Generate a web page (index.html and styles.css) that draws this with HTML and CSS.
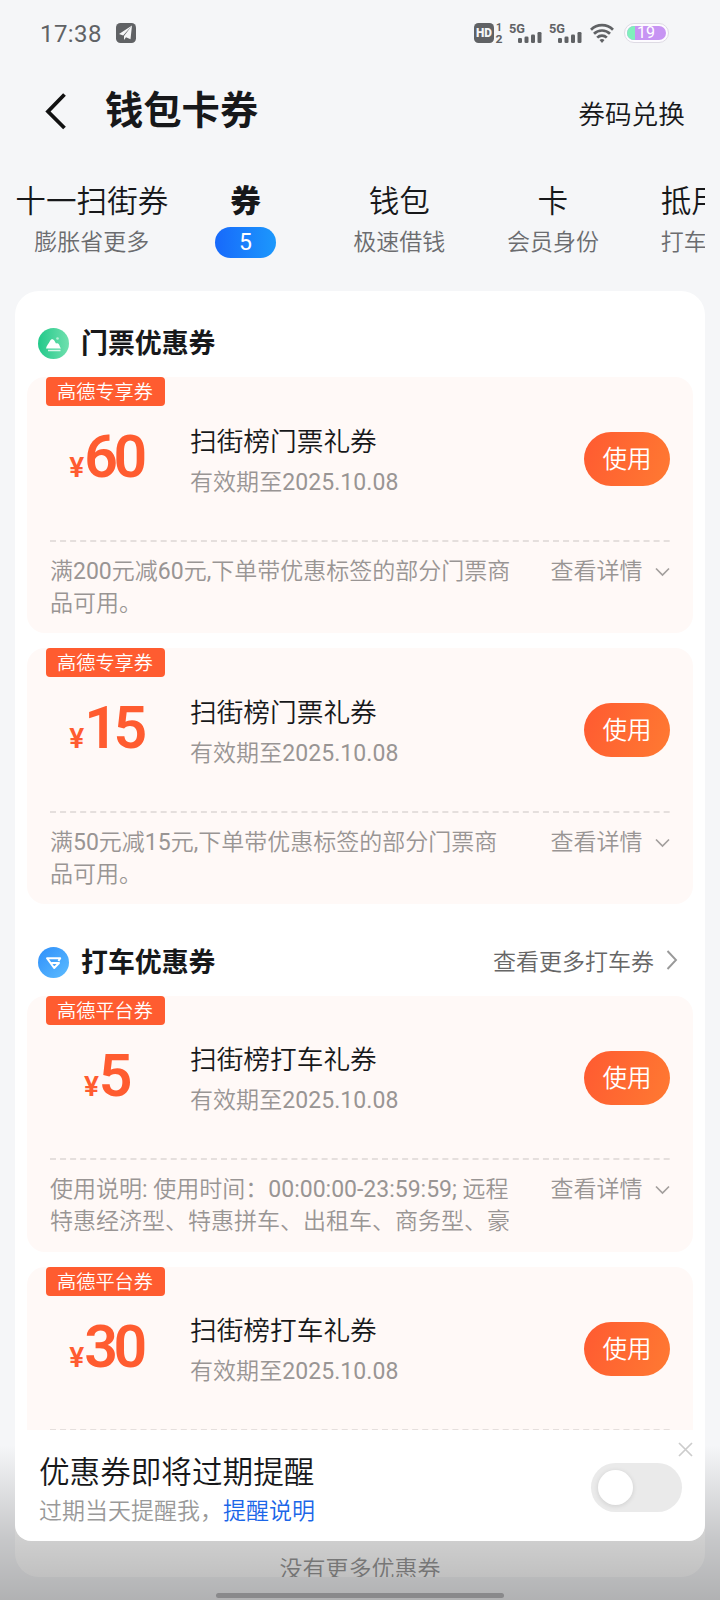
FILE: index.html
```html
<!DOCTYPE html>
<html lang="zh-CN">
<head>
<meta charset="utf-8">
<title>钱包卡券</title>
<link rel="stylesheet" href="styles.css">
</head>
<body>
<div class="screen">
  <div class="status">
    <span class="time">17:38</span>
    <svg class="plane" width="20" height="20" viewBox="0 0 20 20"><rect width="20" height="20" rx="4.500" fill="#606265"/><path d="M16 2.500 3 11l4.200 1.600zM16 2.500 8 13v4l2-2.700 4.500 2z" fill="#f5f6f8"/></svg>
    <svg class="signals" width="196" height="24" viewBox="0 0 196 24">
      <rect x="0" y="2" width="20" height="20" rx="4.500" fill="#606265"/>
      <text x="10" y="16.200" class="hd" text-anchor="middle" textLength="16" lengthAdjust="spacingAndGlyphs">HD</text>
      <text x="22" y="10" class="sim">1</text>
      <text x="21.500" y="21.500" class="sim" textLength="7" lengthAdjust="spacingAndGlyphs">2</text>
      <g fill="#606265">
        <text x="35" y="11.500" class="net" textLength="16" lengthAdjust="spacingAndGlyphs">5G</text>
        <rect x="44" y="17" width="4" height="5" rx="1.300"/><rect x="50.500" y="15.500" width="4" height="6.500" rx="1.300"/><rect x="57" y="13.500" width="4" height="8.500" rx="1.300"/><rect x="63.500" y="11" width="4" height="11" rx="1.300"/>
        <text x="75" y="11.500" class="net" textLength="16" lengthAdjust="spacingAndGlyphs">5G</text>
        <rect x="84" y="17" width="4" height="5" rx="1.300"/><rect x="90.500" y="15.500" width="4" height="6.500" rx="1.300"/><rect x="97" y="13.500" width="4" height="8.500" rx="1.300"/><rect x="103.500" y="11" width="4" height="11" rx="1.300"/>
      </g>
      <g fill="none" stroke="#606265" stroke-width="2.700">
        <path d="M117 8.700a15.500 15.500 0 0 1 22 0"/><path d="M120 12.800a11.300 11.300 0 0 1 16 0"/><path d="M123.200 16.600a6.800 6.800 0 0 1 9.600 0"/>
      </g>
      <path d="M125.500 19a4 4 0 0 1 5 0L128 22z" fill="#606265"/>
      <rect x="150.500" y="2.500" width="44" height="19" rx="9.500" fill="#fdfbff" stroke="#dedbe4"/>
      <rect x="153" y="5" width="39" height="14" rx="7" fill="#c794f3"/>
      <path d="M161 5h-1a7 7 0 0 0 0 14h1z" fill="#80f0bc"/>
      <text x="172" y="17" class="level" text-anchor="middle">19</text>
    </svg>
  </div>

  <header class="header">
    <svg class="back" width="24" height="40" viewBox="0 0 24 40"><path d="M20.500 3.500 4 20.500l16.500 16.500" fill="none" stroke="#111" stroke-width="3.800"/></svg>
    <h1 class="page-title">钱包卡券</h1>
    <a class="redeem">券码兑换</a>
  </header>

  <nav class="tabs">
    <div class="tab"><span class="tab-name">十一扫街券</span><span class="tab-sub">膨胀省更多</span></div>
    <div class="tab active"><span class="tab-name">券</span><span class="pill">5</span></div>
    <div class="tab"><span class="tab-name">钱包</span><span class="tab-sub">极速借钱</span></div>
    <div class="tab"><span class="tab-name">卡</span><span class="tab-sub">会员身份</span></div>
    <div class="tab last"><span class="tab-name">抵用</span><span class="tab-sub">打车</span></div>
  </nav>

  <main class="panel">
    <div class="section-head first">
      <svg width="31" height="31" viewBox="0 0 31 31"><defs><linearGradient id="g1" x1="0" y1="0" x2="1" y2="0"><stop offset="0" stop-color="#22c98a"/><stop offset="1" stop-color="#70e0ae"/></linearGradient></defs><circle cx="15.500" cy="15.500" r="15.500" fill="url(#g1)"/><path d="M8 20.500c.5-3 2.500-4.500 4-7.500 1-2.300 3.400-2.300 4.600 0l1.400 2.500c2-1 3 .5 3.500 2 .4 1.500 1 2.300 1.500 3z" fill="#fff"/><path d="M10 22.500h12.500" stroke="#d8f7e9" stroke-width="1.300"/><circle cx="19.500" cy="10.500" r="1.300" fill="#b5f0d6"/></svg>
      <h2>门票优惠券</h2>
    </div>

    <article class="coupon">
      <span class="badge">高德专享券</span>
      <div class="coupon-main">
        <div class="amount"><span class="yen">¥</span><span class="num">60</span></div>
        <div class="info"><div class="name">扫街榜门票礼券</div><div class="date">有效期至<b>2025.10.08</b></div></div>
        <button class="use">使用</button>
      </div>
      <svg class="dash" width="620" height="2"><path d="M0 1h620" stroke="#e5dfdd" stroke-width="2" stroke-dasharray="6 4.060"/></svg>
      <div class="terms"><p>满<b>200</b>元减<b>60</b>元<b>,</b>下单带优惠标签的部分门票商<br>品可用。</p><span class="more">查看详情</span><svg width="15" height="10" viewBox="0 0 15 10"><path d="M1 1.500l6.500 6.500L14 1.500" fill="none" stroke="#a39f9d" stroke-width="1.700"/></svg></div>
    </article>

    <article class="coupon">
      <span class="badge">高德专享券</span>
      <div class="coupon-main">
        <div class="amount"><span class="yen">¥</span><span class="num">15</span></div>
        <div class="info"><div class="name">扫街榜门票礼券</div><div class="date">有效期至<b>2025.10.08</b></div></div>
        <button class="use">使用</button>
      </div>
      <svg class="dash" width="620" height="2"><path d="M0 1h620" stroke="#e5dfdd" stroke-width="2" stroke-dasharray="6 4.060"/></svg>
      <div class="terms"><p>满<b>50</b>元减<b>15</b>元<b>,</b>下单带优惠标签的部分门票商<br>品可用。</p><span class="more">查看详情</span><svg width="15" height="10" viewBox="0 0 15 10"><path d="M1 1.500l6.500 6.500L14 1.500" fill="none" stroke="#a39f9d" stroke-width="1.700"/></svg></div>
    </article>

    <div class="section-head second">
      <svg width="31" height="31" viewBox="0 0 31 31"><defs><linearGradient id="g2" x1="0" y1="0" x2="1" y2="1"><stop offset="0" stop-color="#2f8ffa"/><stop offset="1" stop-color="#5cbcff"/></linearGradient></defs><circle cx="15.500" cy="15.500" r="15.500" fill="url(#g2)"/><path d="M13.500 16h7.500l-4.800 5L9 11.200h13.200l-1.700 2.800" fill="none" stroke="#fff" stroke-width="2" stroke-linejoin="round"/></svg>
      <h2>打车优惠券</h2>
      <a class="all">查看更多打车券</a>
      <svg class="arrow" width="12" height="22" viewBox="0 0 12 22"><path d="M1.500 2l8.500 9-8.500 9" fill="none" stroke="#999" stroke-width="1.900"/></svg>
    </div>

    <article class="coupon ride">
      <span class="badge">高德平台券</span>
      <div class="coupon-main">
        <div class="amount"><span class="yen">¥</span><span class="num">5</span></div>
        <div class="info"><div class="name">扫街榜打车礼券</div><div class="date">有效期至<b>2025.10.08</b></div></div>
        <button class="use">使用</button>
      </div>
      <svg class="dash" width="620" height="2"><path d="M0 1h620" stroke="#e5dfdd" stroke-width="2" stroke-dasharray="6 4.060"/></svg>
      <div class="terms"><p>使用说明<b>: </b>使用时间：<b>00:00:00-23:59:59; </b>远程<br>特惠经济型、特惠拼车、出租车、商务型、豪</p><span class="more">查看详情</span><svg width="15" height="10" viewBox="0 0 15 10"><path d="M1 1.500l6.500 6.500L14 1.500" fill="none" stroke="#a39f9d" stroke-width="1.700"/></svg></div>
    </article>

    <article class="coupon ride">
      <span class="badge">高德平台券</span>
      <div class="coupon-main">
        <div class="amount"><span class="yen">¥</span><span class="num">30</span></div>
        <div class="info"><div class="name">扫街榜打车礼券</div><div class="date">有效期至<b>2025.10.08</b></div></div>
        <button class="use">使用</button>
      </div>
      <svg class="dash" width="620" height="2"><path d="M0 1h620" stroke="#e5dfdd" stroke-width="2" stroke-dasharray="6 4.060"/></svg>
    </article>

    <div class="end">没有更多优惠券</div>
  </main>

  <div class="shade"></div>
  <section class="reminder">
    <div class="reminder-text">
      <div class="reminder-title">优惠券即将过期提醒</div>
      <div class="reminder-sub">过期当天提醒我，<a>提醒说明</a></div>
    </div>
    <div class="toggle"><span class="knob"></span></div>
    <svg class="close" width="15" height="15" viewBox="0 0 15 15"><path d="M1 1l13 13M14 1L1 14" stroke="#ccc" stroke-width="1.700"/></svg>
  </section>
  <div class="home-bar"></div>
</div>
</body>
</html>
```

FILE: styles.css
```css
* { box-sizing: border-box; }
body, h1, h2, p { margin: 0; }
body { font-family: Roboto, "Noto Sans CJK SC", sans-serif; font-weight: 350; color: #17181a; }
b { font-weight: 400; }
.screen { position: relative; width: 720px; height: 1600px; overflow: hidden; background: #f5f6f8; }

.status { display: flex; align-items: center; height: 66px; padding: 0 50px 0 40px; }
.time { font-size: 24px; font-weight: 400; color: #606265; letter-spacing: 0.400px; width: 76px; margin-top: 1px; }
.signals { margin-left: auto; }
.hd { font: 900 12px Roboto, sans-serif; fill: #f5f6f8; }
.sim { font: 700 10.500px Roboto, sans-serif; fill: #606265; }
.net { font: 700 13px Roboto, sans-serif; }
.level { font: 400 16px Roboto, sans-serif; fill: #fff; }

.header { display: flex; align-items: center; height: 92px; padding: 0 35px 0 44px; }
.back { margin-top: -2px; }
.page-title { margin: -3px 0 0 37px; font-size: 38.300px; line-height: 50px; font-weight: 700; }
.redeem { margin: 6px 0 0 auto; font-size: 26.700px; line-height: 36px; }

.tabs { display: flex; width: 690px; height: 133px; margin-left: 15px; padding-top: 22px; overflow: hidden; }
.tab { flex: 0 0 153.700px; display: flex; flex-direction: column; align-items: center; white-space: nowrap; }
.tab-name { font-size: 30.600px; line-height: 44px; }
.tab-sub { margin-top: 3px; font-size: 23px; line-height: 32px; color: #6b6c6f; }
.active .tab-name { font-weight: 900; }
.pill { width: 61px; height: 31px; margin-top: 3px; border-radius: 16px; background: linear-gradient(90deg, #1769fb, #1c98fc); color: #fff; font-size: 23px; line-height: 31px; font-weight: 400; text-align: center; }
.last { align-items: flex-start; padding-left: 31px; }

.panel { width: 690px; height: 1286px; margin-left: 15px; padding: 0 12px; border-radius: 24px; background: #fff; overflow: hidden; }
.section-head { display: flex; align-items: center; padding: 0 15px 0 11px; }
.section-head.first { height: 86px; padding-top: 18px; }
.section-head.second { height: 77px; padding-top: 9px; }
.section-head h2 { margin: 2px 0 0 12px; font-size: 26.900px; line-height: 38px; font-weight: 700; }
.all { margin: -4px 0 0 auto; font-size: 23px; color: #666; }
.arrow { margin: -5px 0 0 12px; }

.coupon { width: 666px; height: 256px; margin-bottom: 15px; padding: 0 23px; border-radius: 18px; background: #fff9f7; }
.badge { display: block; width: 119px; height: 29px; margin-left: -4.500px; border-radius: 4px; background: #ff5c30; color: #fff; font-size: 19.200px; line-height: 31px; text-align: center; }
.coupon-main { display: flex; align-items: center; height: 107px; }
.amount { width: 114px; display: flex; justify-content: center; align-items: baseline; color: #ff5c30; font-weight: 600; line-height: 60px; margin: 6px 0 0 -1px; }
.yen { font-size: 28px; margin-right: 0; }
.num { font-size: 59px; letter-spacing: -4.500px; }
.info { margin: 4px 0 0 27px; }
.name { font-size: 26.700px; line-height: 38px; }
.date { margin-top: 4px; font-size: 23px; line-height: 36px; color: #999594; letter-spacing: 0.060px; }
.use { width: 86px; height: 54px; margin: -1px 0 0 auto; padding: 0; border: 0; border-radius: 27px; background: linear-gradient(110deg, #ff5a31, #ff7a32); color: #fff; font: inherit; font-size: 24.500px; line-height: 56px; }
.dash { display: block; margin-top: 27px; }
.terms { display: flex; align-items: flex-start; margin-top: 14px; font-size: 23px; line-height: 32px; color: #999594; }
.terms p { width: 500.500px; white-space: nowrap; }
.terms svg { margin: 11px 0 0 12px; }
.ride .info { margin-top: 3px; }
.ride .use { margin-top: -2px; }
.ride .dash { margin-top: 26px; }
.end { margin-top: 31px; text-align: center; font-size: 23px; line-height: 32px; color: #999; }

.shade { position: absolute; left: 0; right: 0; bottom: 0; height: 155px; background: linear-gradient(180deg, rgba(0,0,0,0), rgba(0,0,0,0.190) 60%, rgba(0,0,0,0.280)); }
.reminder { position: absolute; left: 15px; top: 1430px; width: 690px; height: 111px; padding: 20px 23px 0 24px; display: flex; justify-content: space-between; background: #fff; border-radius: 0 0 16px 16px; }
.reminder-title { font-size: 30.600px; line-height: 46px; }
.reminder-sub { font-size: 23px; line-height: 32px; color: #999; }
.reminder-sub a { color: #1b66e8; }
.toggle { width: 91px; height: 49px; margin-top: 13px; padding: 7px; border-radius: 25px; background: #eaeaea; }
.knob { display: block; width: 35px; height: 35px; border-radius: 50%; background: #fff; box-shadow: 0 1px 5px rgba(0,0,0,0.120); }
.close { position: absolute; right: 12px; top: 12px; }
.home-bar { position: absolute; left: 216px; bottom: 2px; width: 288px; height: 5px; border-radius: 3px; background: #89898b; }
```
